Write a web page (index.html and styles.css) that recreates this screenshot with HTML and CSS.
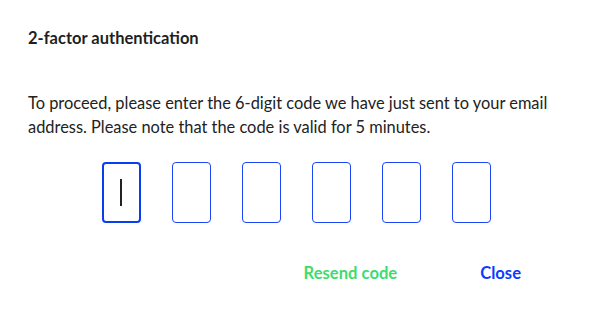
FILE: index.html
```html
<!DOCTYPE html>
<html lang="en">
<head>
<meta charset="utf-8">
<title>2-factor authentication</title>
<link rel="stylesheet" href="styles.css">
</head>
<body>
<div class="dialog">
  <h2 class="title">2-factor authentication</h2>
  <p class="text">To proceed, please enter the 6-digit code we have just sent to your email address. Please note that the code is valid for 5 minutes.</p>
  <div class="codes">
    <div class="box active"><span class="caret"></span></div>
    <div class="box"></div>
    <div class="box"></div>
    <div class="box"></div>
    <div class="box"></div>
    <div class="box"></div>
  </div>
  <div class="actions">
    <button class="btn resend">Resend code</button>
    <button class="btn close">Close</button>
  </div>
</div>
</body>
</html>
```
FILE: styles.css
```css
html, body {
  margin: 0;
  padding: 0;
  background: #ffffff;
}
body {
  font-family: Lato, "Noto Sans", sans-serif;
  color: #222222;
}
.dialog {
  width: 592px;
  height: 322px;
  box-sizing: border-box;
  padding: 27px 28px 0 28px;
}
.title {
  margin: 0;
  font-size: 16.5px;
  font-weight: 700;
  line-height: 22px;
  color: #1f1f1f;
}
.text {
  margin: 42px 0 0 0;
  font-size: 16.4px;
  line-height: 24px;
  color: #222222;
}
.codes {
  display: flex;
  justify-content: center;
  gap: 31px;
  margin-top: 23px;
}
.box {
  width: 39px;
  height: 61px;
  box-sizing: border-box;
  border: 1px solid #1c45f5;
  border-radius: 4px;
  display: flex;
  align-items: center;
  justify-content: center;
}
.box.active {
  border: 2px solid #0a3cf0;
}
.caret {
  width: 1.5px;
  height: 27px;
  background: #222;
}
.actions {
  display: flex;
  justify-content: flex-end;
  margin-top: 38px;
  padding-right: 19px;
  gap: 35px;
}
.btn {
  border: 0;
  background: none;
  font-family: inherit;
  font-size: 16.6px;
  font-weight: 700;
  padding: 0 24px;
  line-height: 24px;
  cursor: pointer;
}
.resend {
  color: #3ddc6e;
}
.close {
  color: #0a3cff;
}
```
